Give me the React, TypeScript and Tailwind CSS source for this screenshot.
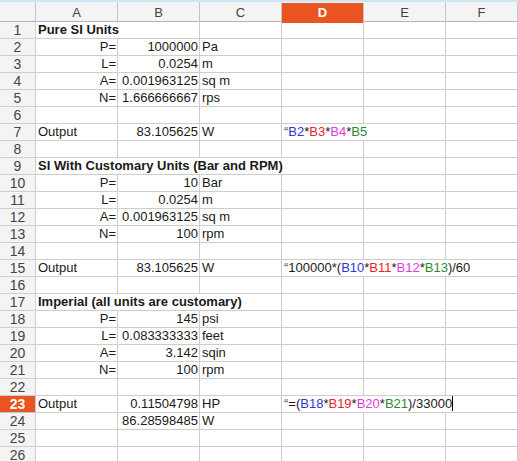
import React from "react";

type Cell = {
  c: React.ReactNode;
  align?: "l" | "r";
  bold?: boolean;
  span?: number;
};

const B = (t: string) => <span className="text-[#2b35d6]">{t}</span>;
const R = (t: string) => <span className="text-[#ee2228]">{t}</span>;
const M = (t: string) => <span className="text-[#e23be4]">{t}</span>;
const G = (t: string) => <span className="text-[#2c8a34]">{t}</span>;
const Q = <span className="text-[#555]">“</span>;

const rows: Record<number, (Cell | null)[]> = {
  1: [{ c: "Pure SI Units", bold: true, span: 2 }],
  2: [{ c: "P=", align: "r" }, { c: "1000000", align: "r" }, { c: "Pa" }],
  3: [{ c: "L=", align: "r" }, { c: "0.0254", align: "r" }, { c: "m" }],
  4: [{ c: "A=", align: "r" }, { c: "0.001963125", align: "r" }, { c: "sq m" }],
  5: [{ c: "N=", align: "r" }, { c: "1.666666667", align: "r" }, { c: "rps" }],
  7: [
    { c: "Output" },
    { c: "83.105625", align: "r" },
    { c: "W" },
    { c: <>{Q}{B("B2")}*{R("B3")}*{M("B4")}*{G("B5")}</>, span: 2 },
  ],
  9: [{ c: "SI With Customary Units (Bar and RPM)", bold: true, span: 4 }],
  10: [{ c: "P=", align: "r" }, { c: "10", align: "r" }, { c: "Bar" }],
  11: [{ c: "L=", align: "r" }, { c: "0.0254", align: "r" }, { c: "m" }],
  12: [{ c: "A=", align: "r" }, { c: "0.001963125", align: "r" }, { c: "sq m" }],
  13: [{ c: "N=", align: "r" }, { c: "100", align: "r" }, { c: "rpm" }],
  15: [
    { c: "Output" },
    { c: "83.105625", align: "r" },
    { c: "W" },
    {
      c: (
        <>
          {Q}100000*({B("B10")}*{R("B11")}*{M("B12")}*{G("B13")})/60
        </>
      ),
      span: 3,
    },
  ],
  17: [{ c: "Imperial (all units are customary)", bold: true, span: 3 }],
  18: [{ c: "P=", align: "r" }, { c: "145", align: "r" }, { c: "psi" }],
  19: [{ c: "L=", align: "r" }, { c: "0.083333333", align: "r" }, { c: "feet" }],
  20: [{ c: "A=", align: "r" }, { c: "3.142", align: "r" }, { c: "sqin" }],
  21: [{ c: "N=", align: "r" }, { c: "100", align: "r" }, { c: "rpm" }],
  23: [
    { c: "Output" },
    { c: "0.11504798", align: "r" },
    { c: "HP" },
    {
      c: (
        <>
          {Q}=({B("B18")}*{R("B19")}*{M("B20")}*{G("B21")})/33000
          <span className="inline-block w-px h-[15px] bg-black align-[-3px]" />
        </>
      ),
      span: 3,
    },
  ],
  24: [null, { c: "86.28598485", align: "r" }, { c: "W" }],
};

function expand(r: (Cell | null)[] | undefined): Cell[] {
  const out: Cell[] = [];
  let n = 0;
  const src = r ?? [];
  for (const c of src) {
    const cell = c ?? { c: "" };
    out.push(cell);
    n += cell.span ?? 1;
  }
  while (n < 6) {
    out.push({ c: "" });
    n++;
  }
  return out;
}

const spanCls: Record<number, string> = {
  1: "col-span-1",
  2: "col-span-2",
  3: "col-span-3",
  4: "col-span-4",
};

export default function App() {
  const cols = ["A", "B", "C", "D", "E", "F"];
  return (
    <div
      className="w-[518px] h-[461px] overflow-hidden bg-white text-[13px] text-[#1a1a1a]"
      style={{ fontFamily: '"Liberation Sans", Arial, sans-serif' }}
    >
      <div className="h-[2px] bg-[#cfe6f3]" />
      <div className="grid grid-cols-[36px_82px_82px_82px_82px_82px_1fr] h-[20px] bg-[#f4f4f4] border-b border-[#b4b4b4]">
        <div className="border-r border-[#c4c4c4]" />
        {cols.map((c) => (
          <div
            key={c}
            className={
              c === "D"
                ? "bg-[#e95420] text-white font-bold flex items-center justify-center border-r border-[#c4c4c4] mt-[1px]"
                : "text-[#444] flex items-center justify-center border-r border-[#c4c4c4]"
            }
          >
            {c}
          </div>
        ))}
      </div>
      {Array.from({ length: 26 }, (_, i) => i + 1).map((n) => {
        const cells = expand(rows[n]);
        return (
          <div
            key={n}
            className="grid grid-cols-[36px_82px_82px_82px_82px_82px_1fr] h-[17px]"
          >
            <div
              className={
                n === 23
                  ? "bg-[#e95420] text-white font-bold text-center leading-[16px] border-r border-b border-[#c4c4c4] text-[14px]"
                  : "bg-[#f4f4f4] text-[#444] text-center leading-[16px] border-r border-b border-[#cfcfcf] text-[14px]"
              }
            >
              {n}
            </div>
            {cells.map((cell, j) => (
              <div
                key={j}
                className={`${spanCls[cell.span ?? 1]} border-r border-b border-[#cdcdcd] leading-[16px] whitespace-nowrap overflow-hidden ${
                  cell.align === "r" ? "text-right pr-[1px]" : "text-left pl-[2px]"
                } ${cell.bold ? "font-bold" : ""}`}
              >
                {cell.c}
              </div>
            ))}
          </div>
        );
      })}
    </div>
  );
}
